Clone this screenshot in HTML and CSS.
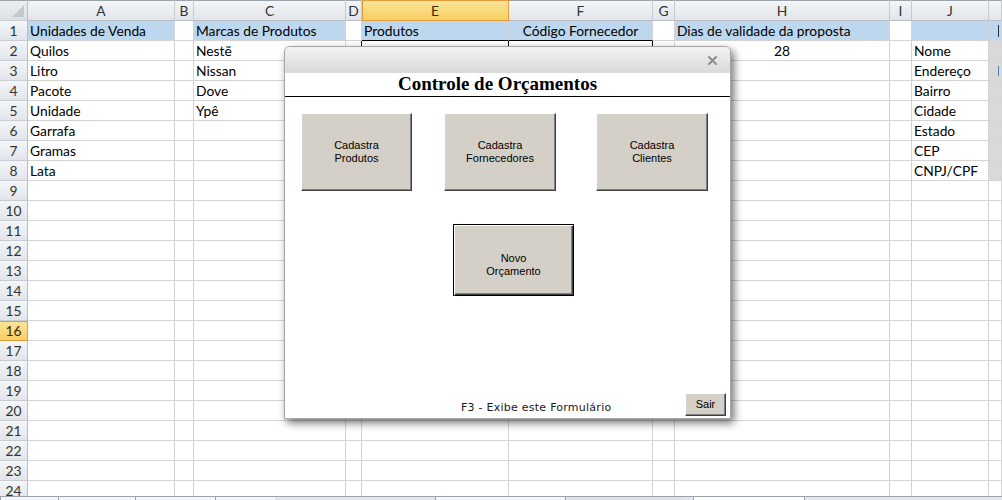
FILE: index.html
```html
<!DOCTYPE html>
<html lang="pt">
<head>
<meta charset="utf-8">
<title>Controle de Orçamentos</title>
<link rel="stylesheet" href="styles.css">
</head>
<body>
<div class="sheet">
  <div class="r hdr">
    <span class="corner"><svg width="28" height="20" viewBox="0 0 28 20"><polygon points="24,5 24,17 12,17" fill="#c3c8ce"/></svg></span>
    <span>A</span><span>B</span><span>C</span><span>D</span><span class="sel">E</span><span>F</span><span>G</span><span>H</span><span>I</span><span>J</span><span></span>
  </div>
  <div class="r"><span>1</span><span class="b">Unidades de Venda</span><span></span><span class="b">Marcas de Produtos</span><span></span><span class="b bb">Produtos</span><span class="b bb ctr">Código Fornecedor</span><span></span><span class="b">Dias de validade da proposta</span><span></span><span class="b"></span><span class="b"><i class="tick dark"></i></span></div>
  <div class="r"><span>2</span><span>Quilos</span><span></span><span>Nestẽ</span><span class="br"></span><span class="br"></span><span class="br"></span><span></span><span class="ctr">28</span><span></span><span>Nome</span><span class="g"></span></div>
  <div class="r"><span>3</span><span>Litro</span><span></span><span>Nissan</span><span></span><span></span><span></span><span></span><span></span><span></span><span>Endereço</span><span class="g"><i class="tick blue"></i></span></div>
  <div class="r"><span>4</span><span>Pacote</span><span></span><span>Dove</span><span></span><span></span><span></span><span></span><span></span><span></span><span>Bairro</span><span class="g"></span></div>
  <div class="r"><span>5</span><span>Unidade</span><span></span><span>Ypê</span><span></span><span></span><span></span><span></span><span></span><span></span><span>Cidade</span><span class="g"></span></div>
  <div class="r"><span>6</span><span>Garrafa</span><span></span><span></span><span></span><span></span><span></span><span></span><span></span><span></span><span>Estado</span><span class="g"></span></div>
  <div class="r"><span>7</span><span>Gramas</span><span></span><span></span><span></span><span></span><span></span><span></span><span></span><span></span><span>CEP</span><span class="g"></span></div>
  <div class="r"><span>8</span><span>Lata</span><span></span><span></span><span></span><span></span><span></span><span></span><span></span><span></span><span>CNPJ/CPF</span><span class="g"></span></div>
  <div class="r"><span>9</span><span></span><span></span><span></span><span></span><span></span><span></span><span></span><span></span><span></span><span></span><span></span></div>
  <div class="r"><span>10</span><span></span><span></span><span></span><span></span><span></span><span></span><span></span><span></span><span></span><span></span><span></span></div>
  <div class="r"><span>11</span><span></span><span></span><span></span><span></span><span></span><span></span><span></span><span></span><span></span><span></span><span></span></div>
  <div class="r"><span>12</span><span></span><span></span><span></span><span></span><span></span><span></span><span></span><span></span><span></span><span></span><span></span></div>
  <div class="r"><span>13</span><span></span><span></span><span></span><span></span><span></span><span></span><span></span><span></span><span></span><span></span><span></span></div>
  <div class="r"><span>14</span><span></span><span></span><span></span><span></span><span></span><span></span><span></span><span></span><span></span><span></span><span></span></div>
  <div class="r"><span>15</span><span></span><span></span><span></span><span></span><span></span><span></span><span></span><span></span><span></span><span></span><span></span></div>
  <div class="r"><span class="sel">16</span><span></span><span></span><span></span><span></span><span></span><span></span><span></span><span></span><span></span><span></span><span></span></div>
  <div class="r"><span>17</span><span></span><span></span><span></span><span></span><span></span><span></span><span></span><span></span><span></span><span></span><span></span></div>
  <div class="r"><span>18</span><span></span><span></span><span></span><span></span><span></span><span></span><span></span><span></span><span></span><span></span><span></span></div>
  <div class="r"><span>19</span><span></span><span></span><span></span><span></span><span></span><span></span><span></span><span></span><span></span><span></span><span></span></div>
  <div class="r"><span>20</span><span></span><span></span><span></span><span></span><span></span><span></span><span></span><span></span><span></span><span></span><span></span></div>
  <div class="r"><span>21</span><span></span><span></span><span></span><span></span><span></span><span></span><span></span><span></span><span></span><span></span><span></span></div>
  <div class="r"><span>22</span><span></span><span></span><span></span><span></span><span></span><span></span><span></span><span></span><span></span><span></span><span></span></div>
  <div class="r"><span>23</span><span></span><span></span><span></span><span></span><span></span><span></span><span></span><span></span><span></span><span></span><span></span></div>
  <div class="r"><span>24</span><span></span><span></span><span></span><span></span><span></span><span></span><span></span><span></span><span></span><span></span><span></span></div>
</div>
<div class="tabbar">
  <div class="tab t1"></div><div class="tab t2"></div><div class="tab t3"></div><div class="tab t4"></div>
  <div class="tab t5"></div><div class="tab t6"></div><div class="scroll"></div>
</div>

<div class="dialog">
  <div class="titlebar">
    <svg class="close" width="9" height="9" viewBox="0 0 9 9"><path d="M1 1L8 8M8 1L1 8" stroke="#8c8c8c" stroke-width="2" stroke-linecap="round"/></svg>
  </div>
  <div class="dbody">
    <h1 class="dtitle">Controle de Orçamentos</h1>
    <div class="btnrow">
      <button class="btn b1">Cadastra<br>Produtos</button>
      <button class="btn b2">Cadastra<br>Fornecedores</button>
      <button class="btn b3">Cadastra<br>Clientes</button>
    </div>
    <div class="novorow">
      <button class="btn novo">Novo<br>Orçamento</button>
    </div>
    <div class="footer">
      <span class="hint">F3 - Exibe este Formulário</span>
      <button class="btn sair">Sair</button>
    </div>
  </div>
</div>
</body>
</html>
```

FILE: styles.css
```css
* { box-sizing: border-box; margin: 0; padding: 0; }
html, body { width: 1002px; height: 500px; overflow: hidden; background: #fff; }
body {
  font-family: Lato, "Liberation Sans", sans-serif;
  font-size: 13.8px;
  color: #000;
  position: relative;
}

.sheet { height: 496px; overflow: hidden; }

.r {
  display: grid;
  grid-template-columns: 28px 147px 19px 152px 16px 147px 144px 22px 215px 22px 77px 1fr;
  height: 20px;
}
.r > span {
  position: relative;
  border-right: 1px solid #d4d4d4;
  border-bottom: 1px solid #d4d4d4;
  padding-left: 2px;
  line-height: 20px;
  white-space: nowrap;
  overflow: hidden;
}
.r > span:first-child {
  padding-left: 0;
  text-align: center;
  color: #333;
  background: linear-gradient(#f4f6f8, #e1e5ea);
  border-right-color: #b9bec5;
  border-bottom-color: #c9cdd3;
}

.hdr { height: 21px; }
.hdr > span {
  padding-left: 0;
  text-align: center;
  color: #333;
  line-height: 21px;
  background: linear-gradient(#f4f6f8, #e1e5ea);
  border-right-color: #c5cad0;
  border-bottom-color: #b9bec5;
  box-shadow: inset 0 1px 0 #9ea4ab;
}
.hdr > span.corner { background: linear-gradient(#eceff2, #dde1e6); }
.corner svg { display: block; }

.r > span.sel {
  background: linear-gradient(#fbe59a, #f7cf63);
  border-right-color: #e39d3a;
  border-bottom-color: #e39d3a;
  color: #3a2a00;
}
.hdr > span.sel { box-shadow: inset 0 1px 0 #e39d3a, inset 1px 0 0 #e39d3a; }
.r > span.sel:first-child { box-shadow: inset 0 1px 0 #e39d3a; }

.r > span.b { background: #bdd7ee; }
.r > span.bb { border-bottom-color: #000; }
.r > span.br { border-right-color: #000; }
.r > span.g { background: #d9d9d9; }
.r > span.ctr { text-align: center; padding-left: 0; }

.tick { position: absolute; left: 9px; width: 1px; }
.tick.dark { top: 4px; height: 12px; background: #333; }
.tick.blue { top: 5px; height: 10px; background: #4f81bd; }

.tabbar {
  height: 4px;
  display: flex;
  background: #e3e7ec;
  border-top: 1px solid #9aa3ae;
}
.tab { height: 3px; border-left: 1px solid #9aa3ae; background: #f5f6f8; }
.t1 { width: 58px; }
.t2 { width: 77px; }
.t3 { width: 80px; }
.t4 { width: 60px; margin-right: 160px; }
.t5 { width: 130px; }
.t6 { width: 120px; background: #dfe3e8; }
.scroll { width: 112px; margin-left: 8px; border-left: 1px solid #9aa3ae; border-right: 1px solid #9aa3ae; background: #fff; }

/* Dialog (UserForm) */
.dialog {
  position: absolute;
  left: 284px;
  top: 46px;
  width: 447px;
  height: 373px;
  background: #fff;
  border: 1px solid #a6a6a6;
  border-radius: 6px 6px 0 0;
  box-shadow: 3px 4px 8px rgba(0, 0, 0, 0.55);
  display: flex;
  flex-direction: column;
}
.titlebar {
  height: 26px;
  flex: none;
  background: linear-gradient(#f2f2f2, #d9d9d9);
  border-radius: 5px 5px 0 0;
  display: flex;
  align-items: center;
  justify-content: flex-end;
  padding-right: 13px;
}
.close { display: block; }

.dbody {
  flex: 1;
  display: flex;
  flex-direction: column;
}
.dtitle {
  font-family: "Liberation Serif", "Times New Roman", serif;
  font-weight: bold;
  font-size: 19px;
  text-align: center;
  height: 24px;
  line-height: 21px;
  padding-right: 20px;
  border-bottom: 1px solid #000;
}

.btn {
  font-family: Tahoma, "Liberation Sans", sans-serif;
  font-size: 11px;
  line-height: 13px;
  color: #000;
  background: #d4d0c8;
  border: 1px solid;
  border-color: #ffffff #404040 #404040 #ffffff;
  box-shadow: inset -1px -1px 0 #808080;
  text-align: center;
}

.btnrow {
  display: flex;
  margin-top: 16px;
  padding-left: 16px;
}
.btnrow .btn { width: 112px; height: 78px; }
.btnrow .b1 { width: 111px; }
.b2 { margin-left: 32px; }
.b3 { margin-left: 40px; }

.novorow {
  display: flex;
  margin-top: 33px;
  padding-left: 168px;
}
.novo {
  width: 121px;
  height: 72px;
  border: 1px solid #000;
  box-shadow: inset 1px 1px 0 #fff, inset -1px -1px 0 #404040, inset -2px -2px 0 #808080;
  padding-top: 9px;
}

.footer {
  margin-top: auto;
  display: flex;
  align-items: flex-end;
  padding: 0 4px 2px 176px;
}
.hint {
  font-family: "DejaVu Sans", Verdana, sans-serif;
  font-size: 11px;
  letter-spacing: 0.25px;
  color: #1a1a1a;
  padding-bottom: 2px;
}
.sair {
  margin-left: auto;
  width: 41px;
  height: 23px;
  font-size: 11px;
}
```
